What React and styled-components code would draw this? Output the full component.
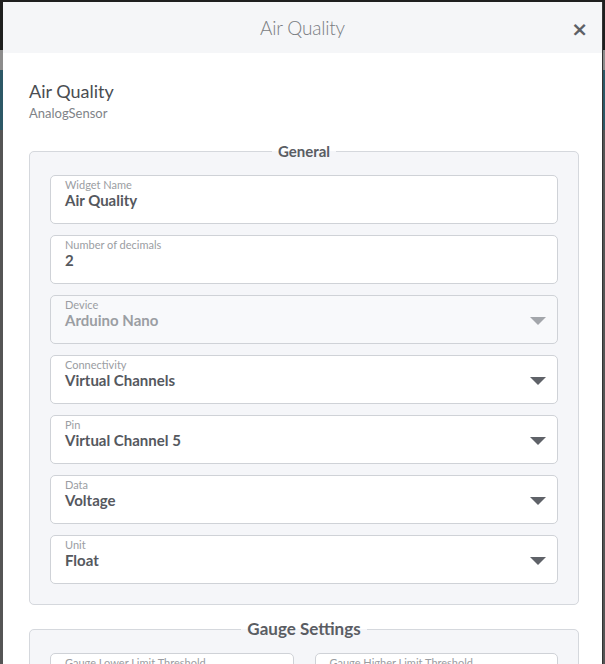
import React from "react";
import styled, { createGlobalStyle } from "styled-components";

const GlobalStyle = createGlobalStyle`
  html, body {
    margin: 0;
    padding: 0;
  }
  body {
    font-family: Lato, "Open Sans", sans-serif;
    background: linear-gradient(to bottom, #1f1f1f 0 50px, #8c8c8c 50px 70px, #2d5866 70px 130px, #555 130px);
    overflow: hidden;
    height: 664px;
  }
`;

const Modal = styled.div`
  margin: 2px 0 0 3px;
  width: 600px;
  height: 662px;
  background: #fff;
  border-right: 1px solid #333;
  box-sizing: border-box;
  overflow: hidden;
`;

const Header = styled.div`
  position: relative;
  height: 51px;
  background: #f5f6f8;
  display: flex;
  align-items: center;
  justify-content: center;
`;

const Title = styled.h4`
  margin: 0;
  font-weight: 300;
  font-size: 19px;
  color: #7a7d82;
  letter-spacing: -0.2px;
`;

const Close = styled.button`
  position: absolute;
  right: 14px;
  top: 17px;
  border: none;
  background: none;
  padding: 0;
  font-size: 20px;
  font-weight: 700;
  line-height: 1;
  color: #5d6066;
  font-family: "DejaVu Sans", sans-serif;
`;

const Body = styled.div`
  padding: 26px 23px 0 26px;
`;

const WidgetName = styled.div`
  font-size: 18px;
  color: #4a4d52;
  line-height: 24px;
`;

const WidgetType = styled.div`
  font-size: 13px;
  color: #808388;
  line-height: 18px;
  margin-top: 1px;
`;

const Fieldset = styled.fieldset`
  margin: ${(p) => p.$top}px 0 0 0;
  padding: 15px 20px 20px 20px;
  border: 1px solid #d5d8dd;
  border-radius: 5px;
  background: #f5f6f9;
  min-width: 0;
`;

const Legend = styled.legend`
  margin: 0 auto;
  padding: 0 6px;
  font-size: ${(p) => p.$size}px;
  font-weight: 700;
  color: #5a5d63;
  line-height: 18px;
`;

const Stack = styled.div`
  display: flex;
  flex-direction: column;
  gap: 11px;
`;

const Row = styled.div`
  display: grid;
  grid-template-columns: 1fr 1fr;
  gap: 21px;
`;

const Field = styled.div`
  position: relative;
  height: 49px;
  box-sizing: border-box;
  border: 1px solid #cfd2d7;
  border-radius: 5px;
  background: ${(p) => (p.$disabled ? "#f8f9fb" : "#fff")};
  padding: 2px 14px 0 14px;
`;

const Label = styled.div`
  font-size: 11px;
  color: #9a9da2;
  line-height: 13px;
`;

const Value = styled.div`
  font-size: 15px;
  font-weight: 700;
  color: ${(p) => (p.$disabled ? "#9b9ea3" : "#55585e")};
  line-height: 18px;
`;

const Caret = styled.span`
  position: absolute;
  right: 11px;
  top: 21px;
  width: 0;
  height: 0;
  border-left: 8px solid transparent;
  border-right: 8px solid transparent;
  border-top: 8px solid ${(p) => (p.$disabled ? "#a3a6ab" : "#5f6268")};
`;

const general = [
  { label: "Widget Name", value: "Air Quality" },
  { label: "Number of decimals", value: "2" },
  { label: "Device", value: "Arduino Nano", select: true, disabled: true },
  { label: "Connectivity", value: "Virtual Channels", select: true },
  { label: "Pin", value: "Virtual Channel 5", select: true },
  { label: "Data", value: "Voltage", select: true },
  { label: "Unit", value: "Float", select: true },
];

const FormField = ({ label, value, select, disabled }) => (
  <Field $disabled={disabled}>
    <Label>{label}</Label>
    <Value $disabled={disabled}>{value}</Value>
    {select && <Caret $disabled={disabled} />}
  </Field>
);

export default function App() {
  return (
    <>
      <GlobalStyle />
      <Modal>
        <Header>
          <Title>Air Quality</Title>
          <Close>×</Close>
        </Header>
        <Body>
          <WidgetName>Air Quality</WidgetName>
          <WidgetType>AnalogSensor</WidgetType>
          <Fieldset $top={20}>
            <Legend $size={15}>General</Legend>
            <Stack>
              {general.map((f) => (
                <FormField key={f.label} {...f} />
              ))}
            </Stack>
          </Fieldset>
          <Fieldset $top={15}>
            <Legend $size={17}>Gauge Settings</Legend>
            <Row>
              <FormField label="Gauge Lower Limit Threshold" value="0" />
              <FormField label="Gauge Higher Limit Threshold" value="5" />
            </Row>
          </Fieldset>
        </Body>
      </Modal>
    </>
  );
}
